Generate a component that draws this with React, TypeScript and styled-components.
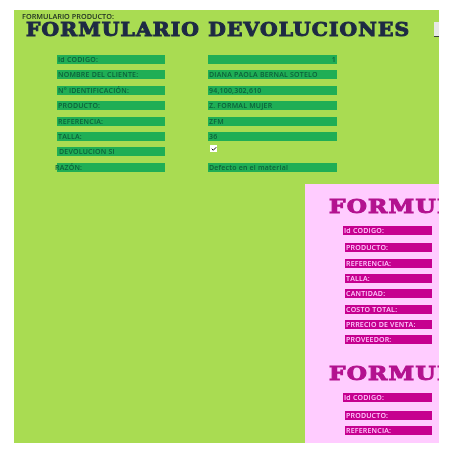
import React from 'react';
import styled, { createGlobalStyle } from 'styled-components';
import { Check } from 'lucide-react';

const GlobalStyle = createGlobalStyle`
  html, body {
    margin: 0;
    padding: 0;
    background: #fff;
  }
`;

const Page = styled.div`
  width: 453px;
  height: 453px;
  padding: 10px 14px;
  box-sizing: border-box;
  font-family: "Open Sans", "Liberation Sans", sans-serif;
  filter: blur(0.35px);
`;

const Sheet = styled.div`
  width: 425px;
  height: 433px;
  background: #a9dc52;
  display: flex;
  flex-direction: column;
  overflow: hidden;
`;

const Caption = styled.div`
  font-size: 7.3px;
  font-weight: 600;
  line-height: 9px;
  height: 9px;
  margin: 2px 0 0 8px;
  color: #1c2b22;
`;

const Title = styled.h1<{ $pink?: boolean }>`
  margin: 2px 0;
  font-family: "DejaVu Serif", serif;
  font-weight: 700;
  font-size: ${(p) => (p.$pink ? 19 : 18)}px;
  line-height: 14px;
  white-space: nowrap;
  transform-origin: left center;
  transform: scaleX(${(p) => (p.$pink ? 1.22 : 1.125)});
  letter-spacing: 1px;
  -webkit-text-stroke: 1px currentColor;
  color: ${(p) => (p.$pink ? '#b3128f' : '#1e2a44')};
`;

const TopBar = styled.div`
  position: relative;
  padding-left: 12px;
  height: 20px;
`;

const Tab = styled.div`
  position: absolute;
  top: 1px;
  right: 0;
  width: 5px;
  height: 14px;
  background: #e6e8e6;
  border-bottom: 1px solid #3b4038;
`;

const Form = styled.div`
  display: grid;
  grid-template-columns: 108px 129px;
  column-gap: 43px;
  row-gap: 6.4px;
  margin: 14px 0 0 43px;
`;

const Cell = styled.div<{ $end?: boolean; $bare?: boolean; $pad?: number }>`
  height: 9px;
  line-height: 9px;
  font-size: 7px;
  font-weight: 600;
  letter-spacing: 0.2px;
  white-space: nowrap;
  padding-left: ${(p) => p.$pad ?? 1}px;
  padding-right: 1px;
  text-align: ${(p) => (p.$end ? 'right' : 'left')};
  background: ${(p) => (p.$bare ? 'transparent' : '#1fae55')};
  color: #0d5f3a;
`;

const Overhang = styled.span`
  display: inline-block;
  margin-left: -2px;
`;

const CheckBox = styled.span`
  display: flex;
  align-items: center;
  justify-content: center;
  width: 7px;
  height: 7px;
  margin: 0 0 0 1px;
  background: #fff;
  box-sizing: border-box;
  color: #111;
  transform: translateY(-2px);
`;

const Panel = styled.div`
  align-self: flex-end;
  width: 134px;
  flex: 1;
  margin-top: 12px;
  background: #ffccff;
  overflow: hidden;
  display: flex;
  flex-direction: column;
  padding: 13px 0 0 24px;
  box-sizing: border-box;
`;

const PanelRows = styled.div<{ $top: number }>`
  display: flex;
  flex-direction: column;
  gap: 6.4px;
  width: 89px;
  margin: ${(p) => p.$top}px 0 0 14px;
`;

const PanelRow = styled.div<{ $first?: boolean }>`
  height: 9px;
  line-height: 9px;
  font-size: 7px;
  font-weight: 600;
  letter-spacing: 0.2px;
  white-space: nowrap;
  padding-left: 1px;
  background: #c6008f;
  color: #ffc8ff;
  margin-left: ${(p) => (p.$first ? 0 : 2)}px;
  margin-bottom: ${(p) => (p.$first ? 2 : 0)}px;
`;

const SecondBlock = styled.div`
  margin-top: 20px;
`;

const formRows: [string, string][] = [
  ['Id CODIGO:', '1'],
  ['NOMBRE DEL CLIENTE:', 'DIANA PAOLA BERNAL SOTELO'],
  ['N° IDENTIFICACIÓN:', '94,100,302,610'],
  ['PRODUCTO:', 'Z. FORMAL MUJER'],
  ['REFERENCIA:', 'ZFM'],
  ['TALLA:', '36'],
];

const firstPanel = ['PRODUCTO:', 'REFERENCIA:', 'TALLA:', 'CANTIDAD:', 'COSTO TOTAL:', 'PRRECIO DE VENTA:', 'PROVEEDOR:'];
const secondPanel = ['PRODUCTO:', 'REFERENCIA:'];

export default function App() {
  return (
    <>
      <GlobalStyle />
      <Page>
        <Sheet>
          <Caption>FORMULARIO PRODUCTO:</Caption>
          <TopBar>
            <Title>FORMULARIO DEVOLUCIONES</Title>
            <Tab />
          </TopBar>
          <Form>
            {formRows.map(([label, value]) => (
              <React.Fragment key={label}>
                <Cell>{label}</Cell>
                <Cell $end={value === '1'}>{value}</Cell>
              </React.Fragment>
            ))}
            <Cell $pad={2}>DEVOLUCION SI</Cell>
            <Cell $bare>
              <CheckBox>
                <Check size={6} strokeWidth={4} />
              </CheckBox>
            </Cell>
            <Cell $pad={0}>
              <Overhang>RAZÓN:</Overhang>
            </Cell>
            <Cell>Defecto en el material</Cell>
          </Form>
          <Panel>
            <Title $pink>FORMULARIO</Title>
            <PanelRows $top={11}>
              <PanelRow $first>Id CODIGO:</PanelRow>
              {firstPanel.map((t) => (
                <PanelRow key={t}>{t}</PanelRow>
              ))}
            </PanelRows>
            <SecondBlock>
              <Title $pink>FORMULARIO</Title>
              <PanelRows $top={13}>
                <PanelRow $first>Id CODIGO:</PanelRow>
                {secondPanel.map((t) => (
                  <PanelRow key={t}>{t}</PanelRow>
                ))}
              </PanelRows>
            </SecondBlock>
          </Panel>
        </Sheet>
      </Page>
    </>
  );
}
